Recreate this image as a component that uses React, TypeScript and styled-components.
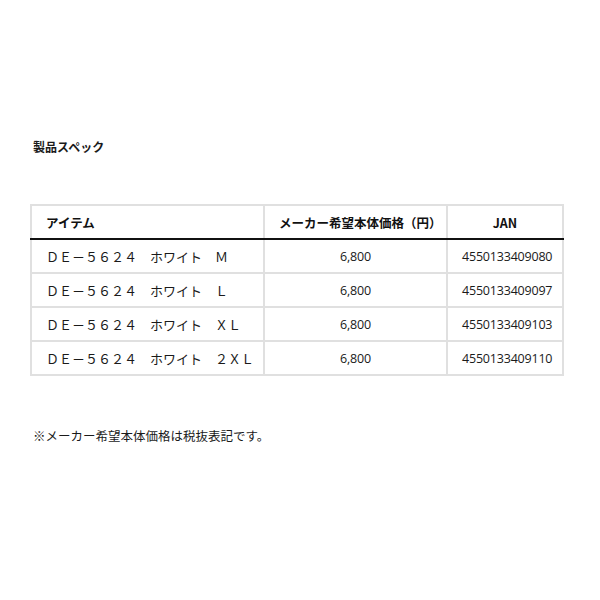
import { createGlobalStyle, styled } from 'styled-components'

const rows = [
  { name: 'ＤＥ－５６２４　ホワイト　Ｍ', price: '6,800', jan: '4550133409080' },
  { name: 'ＤＥ－５６２４　ホワイト　Ｌ', price: '6,800', jan: '4550133409097' },
  { name: 'ＤＥ－５６２４　ホワイト　ＸＬ', price: '6,800', jan: '4550133409103' },
  { name: 'ＤＥ－５６２４　ホワイト　２ＸＬ', price: '6,800', jan: '4550133409110' },
]

const App = () => {
  return (
    <>
      <GlobalStyle />
      <Page>
        <Heading>製品スペック</Heading>
        <SpecTable>
          <colgroup>
            <col style={{ width: 233 }} />
            <col style={{ width: 183 }} />
            <col />
          </colgroup>
          <thead>
            <tr>
              <HeadCell>アイテム</HeadCell>
              <HeadCell $center>メーカー希望本体価格（円）</HeadCell>
              <HeadCell $center>JAN</HeadCell>
            </tr>
          </thead>
          <tbody>
            {rows.map((item) => {
              return (
                <tr key={item.jan}>
                  <Cell>{item.name}</Cell>
                  <Cell $center>{item.price}</Cell>
                  <Cell $center>{item.jan}</Cell>
                </tr>
              )
            })}
          </tbody>
        </SpecTable>
        <Note>※メーカー希望本体価格は税抜表記です。</Note>
      </Page>
    </>
  )
}

const GlobalStyle = createGlobalStyle`
  body {
    margin: 0;
    background: #fff;
    color: #1a1a1a;
    font-family: "Liberation Sans", "Noto Sans CJK JP", sans-serif;
  }
`

const Page = styled.div`
  width: 534px;
  padding: 138px 0 0 30px;
`

const Heading = styled.h2`
  margin: 0 0 48px 3px;
  font-size: 12px;
  line-height: 18px;
  font-weight: 700;
  font-family: "Noto Sans CJK JP", sans-serif;
`

const SpecTable = styled.table`
  width: 534px;
  border-collapse: collapse;
  table-layout: fixed;
  border: 2px solid #e0e0e0;
  font-size: 12px;
`

const HeadCell = styled.th<{ $center?: boolean }>`
  height: 34px;
  padding: 0 14px;
  box-sizing: border-box;
  text-align: ${(p) => (p.$center ? 'center' : 'left')};
  font-size: 12.5px;
  font-weight: 700;
  color: #111;
  font-family: "Noto Sans CJK JP", sans-serif;
  border-left: 2px solid #e0e0e0;
  border-bottom: 2px solid #111;
  white-space: nowrap;
`

const Cell = styled.td<{ $center?: boolean }>`
  height: 34px;
  padding: 0 14px;
  box-sizing: border-box;
  text-align: ${(p) => (p.$center ? 'center' : 'left')};
  font-size: ${(p) => (p.$center ? '12.5px' : '13px')};
  font-family: ${(p) =>
    p.$center ? '"Open Sans", "Noto Sans CJK JP", sans-serif' : 'inherit'};
  letter-spacing: ${(p) => (p.$center ? '-0.2px' : '0')};
  border-left: 2px solid #e0e0e0;
  border-top: 2px solid #e0e0e0;
  white-space: nowrap;
`

const Note = styled.p`
  margin: 51px 0 0 3px;
  font-size: 12.5px;
  line-height: 18px;
  font-family: "Noto Sans CJK JP", sans-serif;
`

export default App
